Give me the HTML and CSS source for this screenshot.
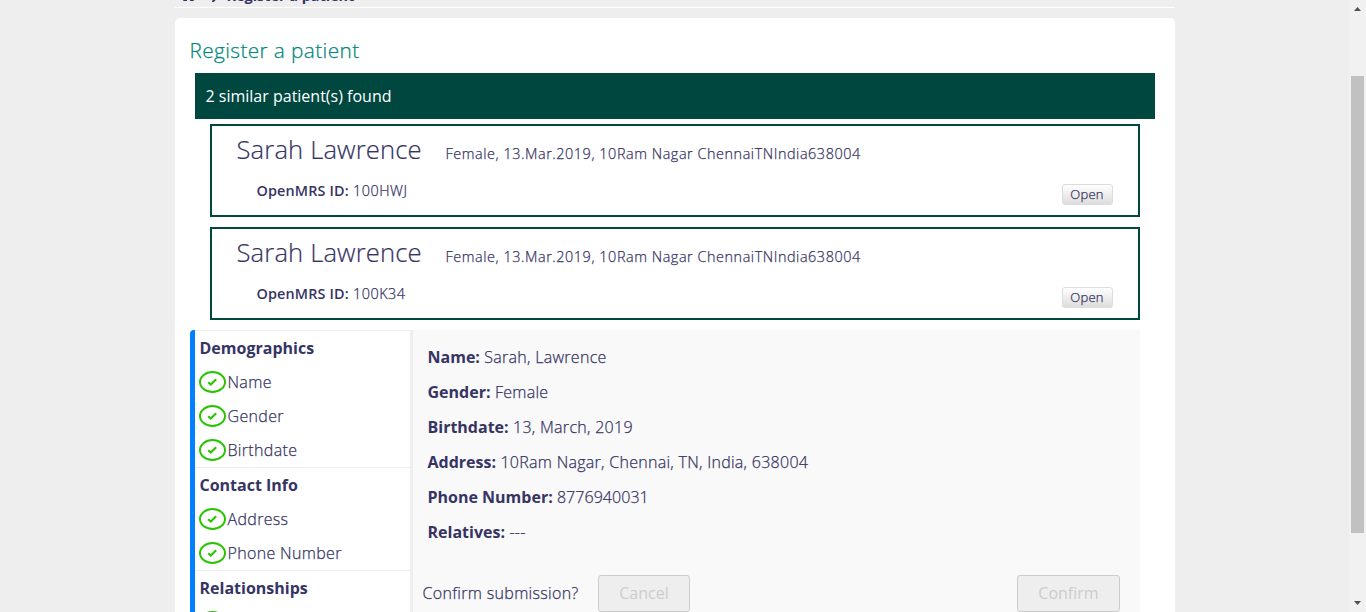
FILE: index.html
```html
<!DOCTYPE html>
<html lang="en">
<head>
<meta charset="utf-8">
<title>Register a patient</title>
<link rel="stylesheet" href="styles.css">
</head>
<body>
<svg class="defs" width="0" height="0">
  <symbol id="check" viewBox="0 0 27 22">
    <ellipse cx="13.5" cy="11" rx="12.5" ry="10" fill="none" stroke="#27c500" stroke-width="2"/>
    <path d="M9.2 11.2 L11.8 13.5 L17.2 8.3" fill="none" stroke="#27c500" stroke-width="2.1"/>
  </symbol>
</svg>
<div class="viewport">
  <div class="page">
    <nav class="breadcrumbs">
      <svg class="home" width="15" height="12" viewBox="0 0 15 12"><path d="M7.5 0 L15 7 H13 V11 Q13 12 12 12 H9 V8 H6 V12 H3 Q2 12 2 11 V7 H0 Z" fill="#363463"/></svg>
      <svg class="chevron" width="7" height="10" viewBox="0 0 7 10"><path d="M1.5 0 L6 5 L1.5 10" fill="none" stroke="#363463" stroke-width="2"/></svg>
      <span>Register a patient</span>
    </nav>
    <main class="content">
      <h2>Register a patient</h2>
      <div class="similar">2 similar patient(s) found</div>
      <section class="patient">
        <div class="patient-head"><span class="patient-name">Sarah Lawrence</span><span class="patient-info">Female, 13.Mar.2019, 10Ram Nagar ChennaiTNIndia638004</span></div>
        <div class="patient-foot"><span class="patient-id"><em>OpenMRS ID:</em> 100HWJ</span><button class="open">Open</button></div>
      </section>
      <section class="patient">
        <div class="patient-head"><span class="patient-name">Sarah Lawrence</span><span class="patient-info">Female, 13.Mar.2019, 10Ram Nagar ChennaiTNIndia638004</span></div>
        <div class="patient-foot"><span class="patient-id"><em>OpenMRS ID:</em> 100K34</span><button class="open">Open</button></div>
      </section>
      <div class="form">
        <ul class="steps">
          <li class="group"><b>Demographics</b>
            <div class="step"><svg class="tick"><use href="#check"/></svg><span>Name</span></div>
            <div class="step"><svg class="tick"><use href="#check"/></svg><span>Gender</span></div>
            <div class="step"><svg class="tick"><use href="#check"/></svg><span>Birthdate</span></div>
          </li>
          <li class="group"><b>Contact Info</b>
            <div class="step"><svg class="tick"><use href="#check"/></svg><span>Address</span></div>
            <div class="step"><svg class="tick"><use href="#check"/></svg><span>Phone Number</span></div>
          </li>
          <li class="group"><b>Relationships</b>
            <div class="step"><svg class="tick"><use href="#check"/></svg></div>
          </li>
        </ul>
        <div class="summary">
          <p><b>Name:</b> Sarah, Lawrence</p>
          <p><b>Gender:</b> Female</p>
          <p><b>Birthdate:</b> 13, March, 2019</p>
          <p><b>Address:</b> 10Ram Nagar, Chennai, TN, India, 638004</p>
          <p class="digits"><b>Phone Number:</b> 8776940031</p>
          <p><b>Relatives:</b> ---</p>
          <div class="confirm"><span class="question">Confirm submission?</span><button class="action cancel" disabled>Cancel</button><button class="action submit" disabled>Confirm</button></div>
        </div>
      </div>
    </main>
  </div>
  <div class="scrollbar">
    <svg width="7" height="4" viewBox="0 0 7 4"><path d="M3.5 0 L7 4 H0 Z" fill="#505050"/></svg>
    <div class="thumb"></div>
    <svg width="7" height="4" viewBox="0 0 7 4"><path d="M0 0 H7 L3.5 4 Z" fill="#505050"/></svg>
  </div>
</div>
</body>
</html>
```
FILE: styles.css
```css
* { box-sizing: border-box; }
html, body { margin: 0; height: 612px; overflow: hidden; }
body { background: #eeeeee; color: #363463; font: 300 16px/24px "Open Sans", sans-serif; }
.defs { display: block; }
.viewport { display: flex; height: 612px; overflow: hidden; }
.page { flex: 1; padding-left: 174.5px; overflow: hidden; }
.breadcrumbs { width: 1000px; height: 36px; margin-top: -28px; margin-bottom: 10px; display: flex; align-items: flex-end; padding: 0 0 1px 6px; border-bottom: 1px solid #fff; font-size: 14.4px; line-height: 20px; font-weight: 700; }
.home { margin-bottom: 5px; }
.chevron { margin: 0 9px 4px 15px; }
.content { width: 1000px; height: 700px; padding: 15px; background: #fff; border-radius: 5px; }
h2 { margin: 0; height: 40px; font-size: 20.8px; line-height: 34px; font-weight: 300; letter-spacing: .39px; color: #00877b; }
h2, .patient-info, .patient-id, .step, .summary p, .question, .open { -webkit-text-stroke: .25px currentColor; }
.patient-id em, .summary b { -webkit-text-stroke: 0; }
.similar { width: 960px; height: 46px; margin-left: 5px; padding-left: 11px; line-height: 46px; background: #00473f; color: #fff; font-weight: 400; }
.patient { width: 930px; height: 93px; margin: 5px 0 10px 20px; border: 2px solid #00473f; padding: 0 25px; font-size: 14.4px; }
.patient + .patient { margin-top: 0; }
.patient-head { display: flex; align-items: baseline; height: 50px; line-height: 48px; }
.patient-name { width: 209px; font-size: 25.6px; letter-spacing: .14px; white-space: nowrap; -webkit-text-stroke: .2px currentColor; }
.patient-info { letter-spacing: .56px; }
.patient-foot { display: flex; justify-content: space-between; padding-left: 20px; }
.patient-id { margin-top: 3px; letter-spacing: .5px; }
.patient-id em { font-style: normal; font-weight: 600; letter-spacing: .15px; }
.open { width: 51px; height: 21px; margin-top: 8px; padding: 0 0 1px; border: 1px solid #ddd; border-radius: 3px; background: linear-gradient(#fff, #ddd); color: #363463; font: 300 13px/16px "Open Sans", sans-serif; letter-spacing: .2px; }
.form { display: flex; height: 400px; width: 950px; }
.steps { width: 220px; margin: 0; padding: 0; list-style: none; border-left: 5px solid #007fff; border-radius: 4px 0 0; }
.group { border-top: 1px solid #eee; padding-left: 4px; }
.group b { display: block; height: 34px; line-height: 34px; padding-left: 1px; }
.step { display: flex; align-items: center; height: 34px; gap: 2px; letter-spacing: .33px; }
.tick { width: 27px; height: 22px; }
.summary { flex: 1; border-left: 3px solid #eee; background: #f9f9f9; padding: 15px 20px 0 15px; }
.summary p { margin: 0 0 11px; height: 24px; letter-spacing: .28px; }
.summary p.digits { letter-spacing: .05px; }
.summary p:last-of-type { margin-bottom: 31px; }
b { font-weight: 700; }
.summary b { letter-spacing: 0; }
.confirm { display: flex; align-items: center; margin-left: -5px; height: 37px; }
.question { width: 175px; padding-bottom: 2px; letter-spacing: .32px; }
.action { height: 37px; padding: 0 0 1px 1px; border: 1px solid #ccc; border-radius: 3px; background: #eee; color: #ccc; font: 400 16px/24px "Open Sans", sans-serif; }
.cancel { width: 92px; }
.submit { width: 103px; margin-left: auto; }
.scrollbar { width: 17px; background: #f1f1f1; display: flex; flex-direction: column; align-items: center; padding: 7px 0; }
.thumb { width: 13px; height: 457px; margin: 65px 0 auto; background: #c1c1c1; }
```
